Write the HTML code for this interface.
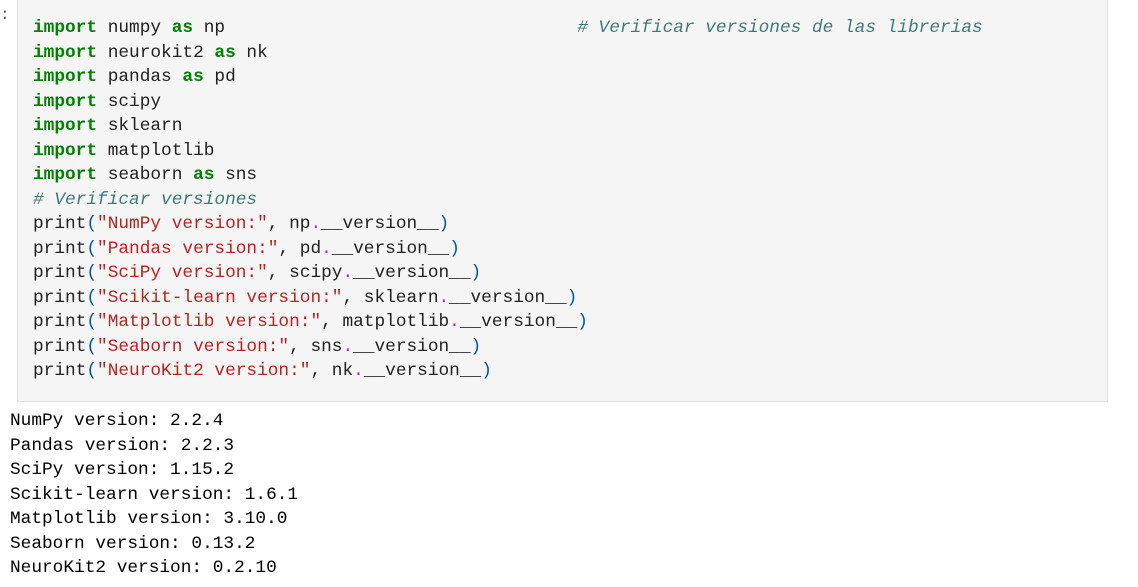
<!DOCTYPE html>
<html><head><meta charset="utf-8"><style>
html,body{margin:0;padding:0;background:#fff;width:1138px;height:587px;overflow:hidden;}
body{font-family:"Liberation Mono",monospace;font-size:17.8px;color:#212121;position:relative;}
.dots{position:absolute;left:0;top:6px;font-size:16px;color:#555;}
.cell{position:absolute;left:17px;top:-1px;width:1091px;height:403px;background:#f5f5f5;border:1px solid #e0e0e0;box-sizing:border-box;}
pre{margin:0;font:inherit;line-height:24.5px;white-space:pre;}
.code{position:absolute;left:33px;top:16px;}
.out{position:absolute;left:10px;top:409px;color:#000;}
.k{color:#008000;font-weight:bold}
.s{color:#ba2121}
.p{color:#0055aa}
.d{color:#aa22ff}
.c{color:#3d7b7b;font-style:italic}
</style></head><body>
<div class="dots">:</div>
<div class="cell"></div>
<pre class="code"><span class="k">import</span> numpy <span class="k">as</span> np                                 <span class="c"># Verificar versiones de las librerias</span>
<span class="k">import</span> neurokit2 <span class="k">as</span> nk
<span class="k">import</span> pandas <span class="k">as</span> pd
<span class="k">import</span> scipy
<span class="k">import</span> sklearn
<span class="k">import</span> matplotlib
<span class="k">import</span> seaborn <span class="k">as</span> sns
<span class="c"># Verificar versiones</span>
print<span class="p">(</span><span class="s">"NumPy version:"</span>, np<span class="d">.</span>__version__<span class="p">)</span>
print<span class="p">(</span><span class="s">"Pandas version:"</span>, pd<span class="d">.</span>__version__<span class="p">)</span>
print<span class="p">(</span><span class="s">"SciPy version:"</span>, scipy<span class="d">.</span>__version__<span class="p">)</span>
print<span class="p">(</span><span class="s">"Scikit-learn version:"</span>, sklearn<span class="d">.</span>__version__<span class="p">)</span>
print<span class="p">(</span><span class="s">"Matplotlib version:"</span>, matplotlib<span class="d">.</span>__version__<span class="p">)</span>
print<span class="p">(</span><span class="s">"Seaborn version:"</span>, sns<span class="d">.</span>__version__<span class="p">)</span>
print<span class="p">(</span><span class="s">"NeuroKit2 version:"</span>, nk<span class="d">.</span>__version__<span class="p">)</span></pre>
<pre class="out">NumPy version: 2.2.4
Pandas version: 2.2.3
SciPy version: 1.15.2
Scikit-learn version: 1.6.1
Matplotlib version: 3.10.0
Seaborn version: 0.13.2
NeuroKit2 version: 0.2.10</pre>
</body></html>
